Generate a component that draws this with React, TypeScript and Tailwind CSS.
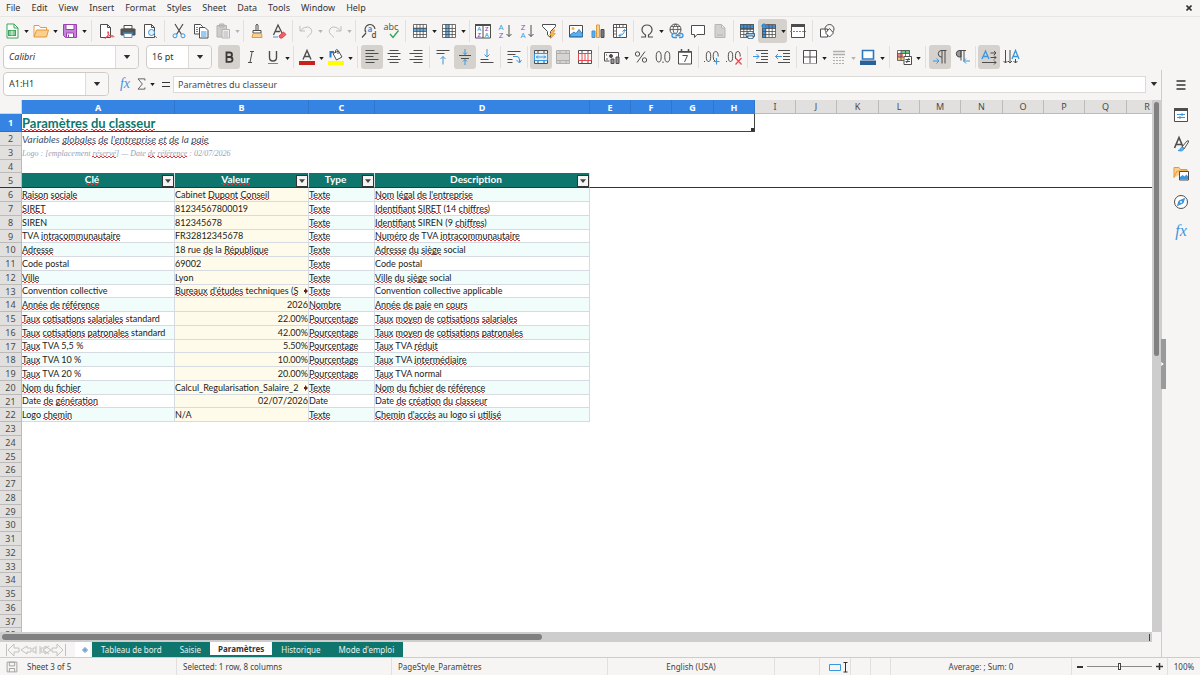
import React from "react";

const menus = ["File", "Edit", "View", "Insert", "Format", "Styles", "Sheet", "Data", "Tools", "Window", "Help"];

const columns = [
  { id: "A", width: 153 },
  { id: "B", width: 134 },
  { id: "C", width: 66 },
  { id: "D", width: 215 },
  { id: "E", width: 41 },
  { id: "F", width: 41 },
  { id: "G", width: 42 },
  { id: "H", width: 41 },
  { id: "I", width: 41 },
  { id: "J", width: 41 },
  { id: "K", width: 42 },
  { id: "L", width: 41 },
  { id: "M", width: 41 },
  { id: "N", width: 42 },
  { id: "O", width: 41 },
  { id: "P", width: 41 },
  { id: "Q", width: 42 },
  { id: "R", width: 41 },
];

const rows = [
  ["~Raison ~sociale", "Cabinet ~Dupont ~Conseil", "~Texte", "~Nom ~légal ~de ~l'entreprise"],
  ["~SIRET", "81234567800019", "~Texte", "~Identifiant ~SIRET (14 ~chiffres)"],
  ["SIREN", "812345678", "~Texte", "~Identifiant SIREN (9 ~chiffres)"],
  ["TVA ~intracommunautaire", "FR32812345678", "~Texte", "~Numéro ~de TVA ~intracommunautaire"],
  ["~Adresse", "18 rue ~de la ~République", "~Texte", "~Adresse ~du ~siège social"],
  ["Code postal", "69002", "~Texte", "Code postal"],
  ["~Ville", "Lyon", "~Texte", "~Ville ~du ~siège social"],
  ["Convention collective", "~Bureaux ~d'études techniques (~S", "~Texte", "Convention collective applicable"],
  ["~Année ~de ~référence", "2026", "~Nombre", "~Année ~de ~paie en ~cours"],
  ["~Taux ~cotisations ~salariales standard", "22.00%", "~Pourcentage", "~Taux ~moyen ~de ~cotisations ~salariales"],
  ["~Taux ~cotisations ~patronales standard", "42.00%", "~Pourcentage", "~Taux ~moyen ~de ~cotisations ~patronales"],
  ["~Taux TVA 5,5 %", "5.50%", "~Pourcentage", "~Taux TVA ~réduit"],
  ["~Taux TVA 10 %", "10.00%", "~Pourcentage", "~Taux TVA ~intermédiaire"],
  ["~Taux TVA 20 %", "20.00%", "~Pourcentage", "~Taux TVA normal"],
  ["~Nom ~du ~fichier", "Calcul_Regularisation_Salaire_2", "~Texte", "~Nom ~du ~fichier ~de ~référence"],
  ["Date ~de ~génération", "02/07/2026", "Date", "Date ~de ~création ~du ~classeur"],
  ["Logo ~chemin", "N/A", "~Texte", "~Chemin ~d'accès au logo si ~utilisé"],
];

const rightAligned = [14, 15, 16, 17, 18, 19, 21];
const truncated = [13, 20];
const emptyRows = Array.from({ length: 16 }, (_, i) => 23 + i);

const K = "#4d4d4d";
const B = "#3a96dd";

// red zigzag drawn from two crossing diagonals per tile
const squiggle =
  "bg-[image:linear-gradient(45deg,transparent_38%,#e23b3b_38%_58%,transparent_58%),linear-gradient(-45deg,transparent_38%,#e23b3b_38%_58%,transparent_58%)] bg-[length:4px_2px] bg-[position:0_100%,2px_100%] bg-repeat-x";

function Spell({ text }: { text: string }) {
  return (
    <>
      {text.split(" ").map((word, i) => {
        const [before, marked] = word.split("~");
        const tail = marked?.match(/[)\]]$/)?.[0] ?? "";
        return (
          <React.Fragment key={i}>
            {i > 0 && " "}
            {before}
            {marked && <span className={squiggle}>{tail ? marked.slice(0, -1) : marked}</span>}
            {tail}
          </React.Fragment>
        );
      })}
    </>
  );
}

function Svg({ children }: { children: React.ReactNode }) {
  return (
    <svg viewBox="0 0 16 16" className="size-4 shrink-0 overflow-visible" fill="none" stroke={K} strokeWidth="1" aria-hidden="true">
      {children}
    </svg>
  );
}

function Glyph({ children, ...rest }: React.SVGProps<SVGTextElement>) {
  return (
    <text stroke="none" fill={K} fontFamily="Open Sans, sans-serif" textAnchor="middle" {...rest}>
      {children}
    </text>
  );
}

function Caret({ muted }: { muted?: boolean }) {
  return (
    <svg viewBox="0 0 6 4" className="h-[3px] w-[5px]" fill={muted ? "#b5b3b1" : "#1d1d1d"} aria-hidden="true">
      <path d="M0 0h6L3 4z" />
    </svg>
  );
}

function Tool({ label, active, menu, muted, children }: { label: string; active?: boolean; menu?: boolean; muted?: boolean; children: React.ReactNode }) {
  return (
    <div className={`flex h-6 shrink-0 items-center rounded-[3px] ${active ? "bg-[#d5d1cd]" : ""}`}>
      <button aria-label={label} className="flex h-6 w-[22px] items-center justify-center">
        <Svg>{children}</Svg>
      </button>
      {menu && (
        <button aria-label={`${label} options`} className="flex h-6 w-[7px] items-center justify-center pt-0.5">
          <Caret muted={muted} />
        </button>
      )}
    </div>
  );
}

function Sep({ wide }: { wide?: boolean }) {
  return (
    <div className={`flex h-[22px] shrink-0 justify-center ${wide ? "w-[7px]" : "w-[5px]"}`}>
      <div className="w-px bg-[#e2e0de]" />
    </div>
  );
}

function TableGrid({ color = K }: { color?: string }) {
  return <path stroke={color} strokeWidth=".8" d="M1.5 1.5h13v13h-13zM1.5 5.5h13M1.5 8.5h13M1.5 11.5h13M4.8 1.5v13M8 1.5v13M11.2 1.5v13" />;
}

function StandardToolbar() {
  return (
    <div className="flex h-[27px] items-center overflow-hidden pl-px">
      <Tool label="New" menu>
        <path fill="#fff" stroke="#3aa757" d="M3 1h7l4 4v10H3z" />
        <path stroke="#3aa757" d="M10 1v4h4" />
        <path fill="#3aa757" stroke="none" d="M4 7h8v6H4z" />
        <path stroke="#fff" strokeWidth=".8" d="M5 9h6M5 11h6M8 7.500v5" />
      </Tool>
      <Tool label="Open" menu>
        <path fill="#fff" stroke="#e8973a" d="M1 13.500v-11h5l1.500 2h6v3" />
        <path fill="#fad08c" stroke="#e8973a" d="M1 14l2.500-7h12l-2 7z" />
      </Tool>
      <Tool label="Save" menu>
        <path fill="#c583d6" stroke="#9c3fb5" d="M1.500 1.500h13v13h-11l-2-2z" />
        <path fill="#fff" stroke="#9c3fb5" d="M4 1.500h8v5H4zM4.500 10h7v4.500h-7z" />
        <path stroke="#9c3fb5" d="M6.500 11.500v3" />
      </Tool>
      <Sep wide />
      <Tool label="Export as PDF">
        <path fill="#fff" d="M2.500 1.500h7l3 3v10h-10zM9.500 1.500v3h3" />
        <path stroke="#e5484d" d="M7 15.500c3-2 4-5 3.500-6.500-.5-1-1.500 0-.5 1.500 1 2 3 3.500 5.500 3.500 1-.5-.5-1.500-2-1.500-2.500 0-5 1-6.500 3z" />
      </Tool>
      <Tool label="Print">
        <path fill="#fff" d="M4 2.500h8V6H4z" />
        <path fill="#555" d="M1 6h14v6H1z" />
        <path stroke={B} d="M3 10h10" />
        <path fill="#fff" stroke={B} d="M4 10.500h8v4H4z" />
      </Tool>
      <Tool label="Print preview">
        <path fill="#fff" d="M2.500 1.500h7l3 3v10h-10zM9.500 1.500v3h3" />
        <circle cx="9.500" cy="9.500" r="3" fill="#e3f1fb" stroke={B} />
        <path stroke={B} d="M11.500 11.500l3.500 3.500" />
      </Tool>
      <Sep wide />
      <Tool label="Cut">
        <path strokeWidth="1.200" d="M4 1l6.500 10.500M12 1L5.500 11.500" />
        <circle cx="4" cy="12.800" r="2" stroke={B} />
        <circle cx="12" cy="12.800" r="2" stroke={B} />
      </Tool>
      <Tool label="Copy">
        <path fill="#fff" d="M1.500 1.500h6l2 2v7.500h-8z" />
        <path fill="#fff" d="M6.500 4.500h5.500l3 3v7.500H6.500z" />
        <path stroke={B} d="M3 4.500h2M3 6.500h2M3 8.500h2M8 9h5.500M8 11h5.500M8 13h5.500" />
      </Tool>
      <Tool label="Paste" menu muted>
        <path fill="#cfcdcb" stroke="#b5b3b1" d="M2 2.500h9.500v11.500H2zM4.500 1h4.500v3H4.500z" />
        <path fill="#eee" stroke="#b5b3b1" d="M7 6.500h7.500v8.500H7zM8.500 9h4.500M8.500 11h4.500M8.500 13h4.500" />
      </Tool>
      <Sep />
      <Tool label="Clone formatting">
        <path d="M7 7.500V2q1-1.500 2 0v5.500M4 7.500h8v2.500H4z" fill="#fff" />
        <path fill="#fad08c" stroke="#e8973a" d="M4 10.500h8.500l.5 4H3z" />
      </Tool>
      <Tool label="Clear formatting">
        <path strokeWidth="1.300" d="M2.500 12L7 2l4.500 9M4 8.500h5" />
        <path stroke={B} d="M2 14h5" />
        <path fill="#f06268" stroke="#d8434a" d="M8 13l4.500-4 2.500 2.500-4 3.500H9z" />
      </Tool>
      <Sep />
      <Tool label="Undo" menu muted>
        <path stroke="#bfbdbb" d="M2 3v5h5M2.500 8C5 4 11 2.500 13 6s-.5 5-4 8.500" />
      </Tool>
      <Tool label="Redo" menu muted>
        <path stroke="#bfbdbb" d="M14 3v5H9M13.500 8C11 4 5 2.500 3 6s.5 5 4 8.500" />
      </Tool>
      <Sep />
      <Tool label="Find and replace">
        <path d="M5 9.500A5 5 0 1 1 14 6M5 10l-4 4.500" strokeWidth="1.200" />
        <Glyph x="9" y="8.500" fontSize="8" fill={B} fontWeight="700">a</Glyph>
        <Glyph x="13" y="15" fontSize="8" fontWeight="600">d</Glyph>
      </Tool>
      <Tool label="Spelling">
        <Glyph x="8" y="7" fontSize="9">abc</Glyph>
        <path stroke="#33a65c" strokeWidth="1.400" d="M7 11l3 3.500 5.500-7" />
      </Tool>
      <Sep wide />
      <Tool label="Row" menu>
        <path fill="#fff" stroke="none" d="M1.500 1.500h13v13h-13z" />
        <path fill="#5cb0ee" stroke="none" d="M1 4.500h14v4H1z" />
        <TableGrid />
      </Tool>
      <Tool label="Column" menu>
        <path fill="#fff" stroke="none" d="M1.500 1.500h13v13h-13z" />
        <path fill="#5cb0ee" stroke="none" d="M4.500 1h4v14h-4z" />
        <TableGrid />
      </Tool>
      <Sep />
      <Tool label="Sort">
        <path fill="#fff" d="M.5 1.500h15v13.500H.5zM8 3v12" />
        <path fill={K} d="M.5 1.500h15v1H.5z" />
        <Glyph x="4.300" y="8" fontSize="6" fill={B} fontWeight="600">A</Glyph>
        <Glyph x="4.300" y="14.300" fontSize="6" fill="#a33cc2" fontWeight="600">Z</Glyph>
        <Glyph x="11.800" y="8" fontSize="6" fill="#a33cc2" fontWeight="600">Z</Glyph>
        <Glyph x="11.800" y="14.300" fontSize="6" fill={B} fontWeight="600">A</Glyph>
      </Tool>
      <Tool label="Sort ascending">
        <Glyph x="4" y="7" fontSize="8" fill={B}>A</Glyph>
        <Glyph x="4" y="15" fontSize="8" fill="#a33cc2">Z</Glyph>
        <path d="M12 2v11.500M9.500 11l2.500 2.500 2.500-2.500" />
      </Tool>
      <Tool label="Sort descending">
        <Glyph x="4" y="7" fontSize="8" fill="#a33cc2">Z</Glyph>
        <Glyph x="4" y="15" fontSize="8" fill={B}>A</Glyph>
        <path d="M12 2v11.500M9.500 11l2.500 2.500 2.500-2.500" />
      </Tool>
      <Tool label="AutoFilter">
        <path fill="#fff" d="M1.500 1.500h13v2L9.500 8.500v6L6.500 12V8.500l-5-5z" />
        <path fill="#fbb44e" stroke="#e8973a" strokeWidth=".7" d="M12 7l-3.500 5h2.500l-1.500 3.500 5-5h-2.500l2-3.500z" />
      </Tool>
      <Sep />
      <Tool label="Image">
        <path fill="#fff" d="M1.500 2.500h13v11.500h-13z" />
        <circle cx="5" cy="5.500" r="1.500" fill="#fbb44e" stroke="none" />
        <path fill="#5cb0ee" stroke="#1e72b8" strokeWidth=".8" d="M2 13.500V12l4-3 2 1.500 3-4 3.500 4.500v2.500z" />
      </Tool>
      <Tool label="Chart">
        <path fill="#5cb0ee" stroke={B} d="M2 8h3v6.500H2z" />
        <path fill="#fad08c" stroke="#e8973a" d="M6.500 2h3v12.500h-3z" />
        <path fill="#777" d="M11 6.500h3v8h-3z" />
      </Tool>
      <Tool label="Pivot table">
        <path fill="#fff" d="M1.500 1.500h13v13h-13z" />
        <path strokeWidth=".8" d="M1.500 4.500h13M4.500 1.500v13M7.500 1.500v3M11 1.500v3M1.500 8h3M1.500 11h3" />
        <path stroke={B} d="M7 12.500q5 0 5.500-5.500M9 10.500l-2 2 2 2M10.500 8.500l2-2 2 2" />
      </Tool>
      <Sep />
      <Tool label="Special character" menu>
        <path strokeWidth="1.200" d="M2 14h4.500v-2C.500 8 3 2 8 2s7.500 6 1.500 10v2H14" />
      </Tool>
      <Tool label="Hyperlink">
        <circle cx="7.500" cy="6.500" r="5.500" />
        <path strokeWidth=".8" d="M2 6.500h11M7.500 1q-5 5 0 11M7.500 1q5 5 0 11M3 3.500h9" />
        <path fill="#f6f5f4" stroke={B} strokeWidth="1.300" d="M9 10.500H6a2 2 0 0 0 0 4h3M11 10.500h2a2 2 0 0 1 0 4h-2M7.500 12.500h5" />
      </Tool>
      <Tool label="Comment">
        <path fill="#fff" d="M1.500 2.500h13v9H7L4.500 14.500v-3h-3z" />
      </Tool>
      <Tool label="Headers and footers">
        <path fill="#d3d1cf" stroke="#b9b7b5" d="M3 1.500h6.500l3.500 3.500v9.500H3zM9.500 1.500V5H13M5 12h6" />
      </Tool>
      <Sep />
      <Tool label="Define print area">
        <path fill="#fff" stroke="none" d="M1 1h14v13H1z" />
        <path fill="#3a8fd8" stroke="none" d="M1 1h14v6H1z" />
        <TableGrid />
        <path fill="#8cc4f0" stroke="#3f5f7c" d="M7 10.500h8.500v3H7z" />
        <path fill="#fff" stroke="#3f5f7c" strokeWidth=".8" d="M9 8.500h5v2H9zM9 13h5v2.500H9z" />
      </Tool>
      <Tool label="Freeze rows and columns" active menu>
        <path fill="#fff" stroke="none" d="M2 2h13v13H2z" />
        <path fill="#3a8fd8" stroke="none" d="M1 2h14v3.500H1zM1 2h4v13H1z" />
        <TableGrid />
        <path stroke={B} d="M0 3h6M3 0v6M1 1l4 4M5 1L1 5" />
      </Tool>
      <Tool label="Split window">
        <path fill="#fff" d="M1.500 1.500h13v13h-13z" />
        <path fill={K} d="M1.500 1.500h13v2h-13z" />
        <path stroke={B} strokeDasharray="2 1" d="M0 8.500h16" />
      </Tool>
      <Sep wide />
      <Tool label="Show draw functions">
        <path fill="#fff" d="M1.500 6h7v8h-7z" />
        <circle cx="10.500" cy="6" r="4.500" />
        <path fill="#fff" d="M10.500 5.500l4 4.500-4 4-4-4z" />
      </Tool>
    </div>
  );
}

function FormattingToolbar() {
  const combo = "flex h-6 shrink-0 rounded-[4px] border border-[#cfccc8] bg-white";
  const drop = "flex w-[23px] items-center justify-center rounded-r-[4px] border-l border-[#dedbd8] bg-[#f8f7f6]";
  return (
    <div className="flex h-[26px] items-center overflow-hidden pl-[3px]">
      <div className={`${combo} mr-[7px] w-[136px]`}>
        <input aria-label="Font name" defaultValue="Calibri" className="min-w-0 flex-1 bg-transparent pl-[5px] text-[9px] italic outline-none" />
        <button aria-label="Font list" className={drop}>
          <BigCaret />
        </button>
      </div>
      <div className={`${combo} mr-[6px] w-[66px]`}>
        <input aria-label="Font size" defaultValue="16 pt" className="min-w-0 flex-1 bg-transparent pl-[5px] text-[9px] outline-none" />
        <button aria-label="Font size list" className={drop}>
          <BigCaret />
        </button>
      </div>
      <Tool label="Bold" active>
        <path strokeWidth="1.800" stroke="#3a3a3a" d="M5.500 3.500h3q2.500 0 2.500 2.200T8.500 8h-3zM5.500 8h3.200q2.800 0 2.800 2.400t-2.800 2.400H5.500zM5.500 2.600v11" />
      </Tool>
      <Tool label="Italic">
        <path d="M7 2.500h4M5 13.500h4M9.200 2.500L7 13.500" />
      </Tool>
      <Tool label="Underline" menu>
        <path strokeWidth="1.400" d="M4.500 2v6.500q0 3.500 3.500 3.500t3.500-3.500V2" />
        <path stroke={B} d="M3 14.500h10" />
      </Tool>
      <Sep />
      <Tool label="Font color" menu>
        <path strokeWidth="1.400" d="M4 10.500L8 1.500l4 9M5.500 7.500h5" />
        <path fill="#c9211e" stroke="none" d="M0 12h16v4H0z" />
      </Tool>
      <Tool label="Background color" menu>
        <path fill="#fff" d="M5 4.500l5.500-2.500 3.500 6-5.500 3zM7.500 4V1.500q1.500-2 2.500 0V5" />
        <path stroke="#2a78c0" strokeWidth="2" d="M6 3H2.500v5.500" />
        <path fill="#ff0" stroke="none" d="M0 12h16v4H0z" />
      </Tool>
      <Sep wide />
      <Tool label="Align left" active>
        <path d="M1.500 1.500h9M1.500 4.500h13M1.500 7.500h8M1.500 10.500h13M1.500 13.500h9" />
      </Tool>
      <Tool label="Center horizontally">
        <path d="M3.500 1.500h9M1.500 4.500h13M4 7.500h8M1.500 10.500h13M3.500 13.500h9" />
      </Tool>
      <Tool label="Align right">
        <path d="M5.500 1.500h9M1.500 4.500h13M6.500 7.500h8M1.500 10.500h13M5.500 13.500h9" />
      </Tool>
      <Sep />
      <Tool label="Align top">
        <path d="M1.500 1.500h13M1.500 4.500h8" />
        <path stroke={B} d="M8 15.500V7.500M5.500 10L8 7.500 10.500 10" />
      </Tool>
      <Tool label="Center vertically" active>
        <path d="M2 6.500h12M4 9.500h8" />
        <path stroke={B} d="M8 0v5.500M6 3.500l2 2 2-2M8 16v-5.500M6 12.500l2-2 2 2" />
      </Tool>
      <Tool label="Align bottom">
        <path d="M1.500 10.500h8M1.500 13.500h13" />
        <path stroke={B} d="M8 0v8M5.500 5.500L8 8l2.500-2.500" />
      </Tool>
      <Sep />
      <Tool label="Wrap text">
        <path d="M1.500 2.500h13M1.500 5.500h8M1.500 10.500h5M1.500 13.500h5" />
        <path stroke={B} d="M7 7.500h4q2.500 0 2.500 3.500v2M10.500 11l3 3 2-3" />
      </Tool>
      <Sep />
      <Tool label="Merge and center cells" active>
        <path fill="#fff" stroke="none" d="M1.500 1.500h13v13h-13z" />
        <path fill="#e3f1fb" d="M1.500 1.500h13v13h-13zM1.500 4.500h13M1.500 11.500h13M5 1.500v3M11 1.500v3M5 11.500v3M11 11.500v3" />
        <path stroke={B} d="M1.500 4.500h13v7h-13zM3 8h10M5 6.500L3.500 8 5 9.500M11 6.500L12.500 8 11 9.500" />
      </Tool>
      <Tool label="Merge cells">
        <path fill="#d6d4d2" stroke="#b0aeac" d="M1.500 1.500h13v13h-13zM1.500 4.500h13M1.500 11.500h13M5 1.500v3M11 1.500v3M5 11.500v3M11 11.500v3" />
      </Tool>
      <Tool label="Unmerge cells">
        <path fill="#fff" d="M1.500 1.500h13v13h-13zM5 1.500v3M11 1.500v3M5 11.500v3M11 11.500v3" />
        <path stroke="#e5484d" d="M1.500 4.500h13v7h-13zM5 4.500v7M8 4.500v7M11 4.500v7" />
      </Tool>
      <Sep />
      <Tool label="Format as currency" menu>
        <path fill="#fff" d="M.5 3.500h14v6M.5 3.500V12h5" />
        <circle cx="7" cy="7" r="1.500" fill={K} />
        <path fill="#999" d="M7 10h3v4.500H7zM12 8h3v6.500h-3zM2 10h2M2 6h1" />
      </Tool>
      <Tool label="Format as percent">
        <circle cx="4.500" cy="5" r="2.200" />
        <circle cx="11.500" cy="11" r="2.200" />
        <path d="M12 2.500L4 13.500" />
      </Tool>
      <Tool label="Format as number">
        <path d="M8 12.500v1.500M3.700 2.500q2.500 0 2.500 5.300t-2.500 5.200q-2.500 0-2.500-5.200t2.500-5.300zM12.300 2.500q2.500 0 2.500 5.300t-2.500 5.200q-2.500 0-2.500-5.200t2.500-5.300z" />
      </Tool>
      <Tool label="Format as date">
        <path fill="#fff" d="M1.500 2.500h13v12.500h-13z" />
        <path strokeWidth="1.500" d="M1.500 3h13M4.500 0v3M11.500 0v3" />
        <path d="M5.500 6.500h5l-3 6.500" />
      </Tool>
      <Sep />
      <Tool label="Add decimal place">
        <path d="M0 12.500h1M4.500 2.500q2.200 0 2.200 5t-2.200 5q-2.200 0-2.200-5t2.200-5zM11 12q-1.800-.5-1.800-4.500 0-5 2.500-5t2.500 5" />
        <path stroke={B} strokeWidth="1.200" d="M12.500 9v6.500M9.500 12.500h6" />
      </Tool>
      <Tool label="Delete decimal place">
        <path d="M0 12.500h1M4.500 2.500q2.200 0 2.200 5t-2.200 5q-2.200 0-2.200-5t2.200-5zM9.500 10q-.5-7.500 2.200-7.500t2.500 5" />
        <path stroke="#e5484d" strokeWidth="1.200" d="M9.500 9l6 6.500M15.500 9l-6 6.500" />
      </Tool>
      <Sep />
      <Tool label="Increase indent">
        <path d="M3 1.500h12M8 4.500h7M8 7.500h7M8 10.500h7M3 13.500h12" />
        <path stroke={B} d="M0 7.500h6M3.500 5L6 7.500 3.500 10" />
      </Tool>
      <Tool label="Decrease indent">
        <path d="M3 1.500h12M8 4.500h7M8 7.500h7M8 10.500h7M3 13.500h12" />
        <path stroke={B} d="M.5 7.500H7M3 5L.5 7.500 3 10" />
      </Tool>
      <Sep />
      <Tool label="Borders" menu>
        <path fill="#fff" d="M1.500 1.500h13v13h-13z" />
        <path d="M8 1.500v13M1.500 8h13" />
        <path stroke="#e8973a" d="M1.500 14.500h13" />
      </Tool>
      <Tool label="Border style" menu muted>
        <path stroke="#b0aeac" strokeWidth="1.500" d="M2 2.500h12M2 5.500h12" />
        <path stroke="#b0aeac" strokeDasharray="2 1" d="M2 8.500h12M2 11.500h12M2 14.500h12" />
      </Tool>
      <Tool label="Border color" menu>
        <path fill="#fff" stroke="#2a78c0" strokeWidth="1.600" d="M2.500 1.500h11v8.500h-11z" />
        <path fill="#2a6099" stroke="none" d="M0 11.500h16V16H0z" />
      </Tool>
      <Sep wide />
      <Tool label="Conditional" menu>
        <path fill="#fff" stroke="none" d="M1 1h13v11H1z" />
        <path fill="#6cc487" stroke="none" d="M5 1h9v3.500H5z" />
        <path fill="#f08084" stroke="none" d="M1 4.500h6V8H1z" />
        <path fill="#fbc26e" stroke="none" d="M1 8h6v3.500H1z" />
        <path strokeWidth=".8" d="M1.500 1.500h12v10h-12zM1.500 4.500h12M1.500 8h12M5 1.500v10M9.500 1.500v10" />
        <path fill="#fff" d="M8 7.500h7.500v8H8zM9.500 10.500h4.500M9.500 12.500h4.500M13 9l-2.500 5" />
      </Tool>
      <Sep wide />
      <Tool label="Left-to-right" active>
        <path d="M14.500 1.500H9a3.300 3.300 0 0 0 0 6.500h1M10 1.500v13M13 1.500v13" />
        <path stroke={B} d="M1 12h6M4.500 9.500L7 12l-2.500 2.500" />
      </Tool>
      <Tool label="Right-to-left">
        <path fill="#999" d="M7 1.500H5a3.300 3.300 0 0 0 0 6.500h2z" />
        <path d="M12 1.500H5M7 1.500v10M10 1.500v10" />
        <path stroke={B} d="M9.500 12H16M12 9.500L9.500 12l2.500 2.500" />
      </Tool>
      <Sep />
      <Tool label="Text direction from left to right" active>
        <path stroke={B} strokeWidth="1.300" d="M1 10L4.500 2 8 10M2 7.500h5" />
        <path d="M9.500 4H15M13 2l2 2-2 2M9.500 8.500H15M13 6.500l2 2-2 2M1 13.500h14M13 11.500l2 2-2 2" />
      </Tool>
      <Tool label="Text direction from top to bottom">
        <path stroke={B} strokeWidth="1.300" d="M9 10l3.500-8.500L16 10M10 7.500h5" />
        <path d="M2.500 1v13M.5 12l2 2 2-2M7 1v13M5 12l2 2 2-2M12.500 10v4M10.500 12l2 2 2-2" />
      </Tool>
    </div>
  );
}

function BigCaret() {
  return (
    <svg viewBox="0 0 8 5" className="h-[4px] w-[8px]" fill="#2e2e2e" aria-hidden="true">
      <path d="M0 0h8L4 5z" />
    </svg>
  );
}

function FormulaBar() {
  return (
    <div className="flex h-[30px] shrink-0 items-center pb-0.5 pl-[3px]">
      <div className="flex h-6 w-[106px] shrink-0 rounded-[4px] border border-[#cfccc8] bg-white">
        <input aria-label="Name box" defaultValue="A1:H1" className="min-w-0 flex-1 bg-transparent pl-[5px] text-[9px] outline-none" />
        <button aria-label="Named ranges" className="flex w-[23px] items-center justify-center rounded-r-[4px] border-l border-[#dedbd8] bg-[#f8f7f6]">
          <BigCaret />
        </button>
      </div>
      <button aria-label="Function wizard" className="ml-2 w-4 text-center font-['Liberation_Serif',serif] text-[14px] leading-none text-[#3a96dd] italic">
        fx
      </button>
      <button aria-label="Select function" className="flex w-[26px] items-center justify-center gap-1">
        <svg viewBox="0 0 10 14" className="h-3 w-[9px]" fill="none" stroke={K} aria-hidden="true">
          <path d="M9 3V1H1l5 6-5 6h8v-2" />
        </svg>
        <Caret />
      </button>
      <button aria-label="Formula" className="flex h-4 w-[14px] flex-col items-center justify-center gap-[3px]">
        <span className="h-px w-2 bg-[#333]" />
        <span className="h-px w-2 bg-[#333]" />
      </button>
      <input
        aria-label="Formula input"
        defaultValue="Paramètres du classeur"
        className="h-[17px] min-w-0 flex-1 border border-[#dcdad7] bg-white pl-1 text-[9px] text-[#4a4a4a] outline-none"
      />
      <button aria-label="Expand formula bar" className="flex w-[15px] justify-center">
        <BigCaret />
      </button>
    </div>
  );
}

function RowHead({ n, active, className = "border-b-[#bdbbb9]" }: { n: number; active?: boolean; className?: string }) {
  return (
    <th
      scope="row"
      className={`border-r border-b p-0 text-center text-[9px] leading-none ${
        active ? "border-[#2a6fc4] bg-[#3584e4] font-bold text-white" : `border-r-[#bdbbb9] bg-[#e1e0df] font-normal text-[#4a4a4a] ${className}`
      }`}
    >
      {n}
    </th>
  );
}

function HeaderCell({ text }: { text: string }) {
  return (
    <th scope="col" className="border-r border-b border-r-[#cfe3e0] border-b-[#333] bg-[#0f766e] p-0 font-bold text-white">
      <div className="flex h-[14px] items-end">
        <span className="flex-1 self-start font-[Lato,sans-serif] text-[10px] leading-3">
          <Spell text={text} />
        </span>
        <button aria-label="Filter" className="flex h-3 w-3 shrink-0 items-center justify-center border border-[#333] bg-[#f4f4f4]">
          <svg viewBox="0 0 8 5" className="h-1 w-[6px]" fill="#444" aria-hidden="true">
            <path d="M0 0h8L4 5z" />
          </svg>
        </button>
      </div>
    </th>
  );
}

function Sheet() {
  return (
    <div className="min-w-0 flex-1 overflow-hidden bg-white">
      <table className="w-[1166px] table-fixed border-separate border-spacing-0 font-[Lato,sans-serif] text-[9px] leading-3 text-[#222] [&_td]:overflow-hidden [&_td]:whitespace-nowrap [&_th]:font-['Noto_Sans',sans-serif]">
        <colgroup>
          <col className="w-[22px]" />
          {columns.map((c) => (
            <col key={c.id} style={{ width: c.width }} />
          ))}
        </colgroup>
        <thead>
          <tr className="h-[14px]">
            <td className="border-r border-b border-[#d6d4d2] bg-[#f6f5f4] p-0" />
            {columns.map((c, i) => (
              <th
                key={c.id}
                scope="col"
                className={`border-r p-0 text-[9px] leading-none ${
                  i < 8 ? "border-[#2f76cc] bg-[#3584e4] font-bold text-white" : "border-b border-[#bdbbb9] bg-[#e1e0df] font-normal text-[#4a4a4a]"
                }`}
              >
                {c.id}
              </th>
            ))}
          </tr>
        </thead>
        <tbody>
          <tr className="h-[18px]">
            <RowHead n={1} active />
            <td colSpan={8} className="relative border-r border-b border-[#444] p-0 text-[13px] leading-4 font-bold text-[#0f766e]">
              <Spell text="~Paramètres ~du ~classeur" />
              <span className="absolute right-0 bottom-0 size-[3px] bg-[#333]" />
            </td>
          </tr>
          <tr className="h-[14px]">
            <RowHead n={2} />
            <td colSpan={4} className="p-0 text-[10px] text-[#475569] italic">
              <Spell text="Variables ~globales ~de ~l'entreprise ~et ~de la ~paie" />
            </td>
          </tr>
          <tr className="h-[14px]">
            <RowHead n={3} />
            <td colSpan={4} className="p-0 pt-0.5 font-['Liberation_Serif',serif] text-[8px] text-[#94a3b8] italic">
              <Spell text="Logo : [emplacement ~réservé] — Date ~de ~référence : 02/07/2026" />
            </td>
          </tr>
          <tr className="h-[13px]">
            <RowHead n={4} />
          </tr>
          <tr className="h-[15px]">
            <RowHead n={5} className="border-b-[#333]" />
            <HeaderCell text="~Clé" />
            <HeaderCell text="~Valeur" />
            <HeaderCell text="Type" />
            <HeaderCell text="Description" />
            <td colSpan={14} className="border-b border-[#333] p-0" />
          </tr>
          {rows.map((row, i) => {
            const n = i + 6;
            const tint = i % 2 === 0 ? "bg-[#f0fdfa]" : "bg-white";
            return (
              <tr key={n} className={i % 4 === 3 ? "h-[13px]" : "h-[14px]"}>
                <RowHead n={n} />
                {row.map((text, c) => (
                  <td
                    key={c}
                    className={`relative border-r border-b border-[#d5dbe0] p-0 ${c === 1 ? "bg-[#fffbeb]" : tint} ${
                      c === 1 && rightAligned.includes(n) ? "text-right" : ""
                    }`}
                  >
                    <Spell text={text} />
                    {c === 1 && truncated.includes(n) && (
                      <span className="absolute inset-y-0 right-0 flex items-center">
                        <svg viewBox="0 0 4 6" className="h-[6px] w-1" fill="#6b2020" aria-hidden="true">
                          <path d="M0 2h1V0l3 3-3 3V4H0z" />
                        </svg>
                      </span>
                    )}
                  </td>
                ))}
              </tr>
            );
          })}
          {emptyRows.map((n) => (
            <tr key={n} className={(n - 6) % 4 === 3 ? "h-[13px]" : "h-[14px]"}>
              <RowHead n={n} />
            </tr>
          ))}
        </tbody>
      </table>
    </div>
  );
}

function SheetTabs() {
  const tabs = ["Tableau de bord", "Saisie", "Paramètres", "Historique", "Mode d'emploi"];
  return (
    <div className="flex h-[15px] shrink-0 items-stretch">
      <div className="flex w-[75px] items-center pl-[5px]">
        <svg viewBox="0 0 62 12" className="h-3 w-[62px]" fill="none" stroke="#c4c2c0" aria-hidden="true">
          <path d="M1.500 0v12M9 0L3 6l6 6V8h5V4H9zM22 2l-6 4 6 4V8h4V4h-4zM31 2v8M35 2v8M31 4h-3v4h3M44 2l-6 4 6 4M40 2l6 4-6 4V8h-4V4h4zM52 0l6 6-6 6V8h-5V4h5zM60.500 0v12" />
        </svg>
      </div>
      <button aria-label="Add sheet" className="mr-0.5 flex w-[15px] items-center justify-end bg-white pr-0.5">
        <svg viewBox="0 0 6 6" className="size-[6px]" fill="none" stroke="#2a6fb8" strokeWidth=".8" aria-hidden="true">
          <path fill="#fff" d="M3 .5L5.500 3 3 5.500.5 3z" />
          <path d="M3 1.500v3M1.500 3h3" />
        </svg>
      </button>
      {tabs.map((t) => (
        <button
          key={t}
          className={`text-[8px] leading-none ${
            t === "Paramètres" ? "border-b-2 border-[#0f766e] bg-white px-2 font-bold text-[#333]" : "bg-[#0f766e] px-[9px] text-[#e6f2f0]"
          }`}
        >
          {t}
        </button>
      ))}
    </div>
  );
}

function Sidebar() {
  return (
    <aside className="relative flex w-[39px] shrink-0 flex-col items-center gap-[13px] border-l border-[#cfccc8] pt-[7px]">
      <button aria-label="Sidebar settings">
        <Svg>
          <path strokeWidth="1.400" stroke="#333" d="M3.500 4h9M3.500 8h9M3.500 12h9" />
        </Svg>
      </button>
      <button aria-label="Properties" className="mt-px">
        <Svg>
          <path fill="#fff" d="M1.500 1.500h13v13h-13z" />
          <path fill={K} d="M1.500 1.500h13v2h-13z" />
          <path stroke={B} d="M4 7.500h8M4 10.500h8M9 6v3M7 9v3" />
        </Svg>
      </button>
      <button aria-label="Styles">
        <Svg>
          <path strokeWidth="1.600" d="M1.500 12L6 1.500 10 11M3 8.500h6" />
          <path fill="#fff" d="M9 11l5-6q2-1 1.500 1L11 13z" />
          <path fill="#5cb0ee" stroke={B} d="M5 14.500q2 0 2.500-2t3-1q1 3-2.500 3.500z" />
        </Svg>
      </button>
      <button aria-label="Gallery">
        <Svg>
          <path fill="#fad08c" stroke="#e8973a" d="M1 12.500V2.500h5l1.500 2H14v1M1 12.500L4 6h11" />
          <path fill="#fff" d="M6.500 6.500h9v8.500h-9z" />
          <path fill={B} stroke="none" d="M7 14.500V12l2.500-2 2 1.500 2-2 1.500 2v3z" />
        </Svg>
      </button>
      <button aria-label="Navigator">
        <Svg>
          <circle cx="8" cy="8" r="6.500" fill="#fff" />
          <path fill={B} stroke={B} d="M11.500 4.500L10 9l-5.500 2.500L6 7z" />
          <circle cx="8" cy="8" r="1" fill="#fff" stroke="none" />
        </Svg>
      </button>
      <button aria-label="Functions" className="h-4 font-['Liberation_Serif',serif] text-[16px] leading-4 text-[#3a96dd] italic">
        fx
      </button>
      <button aria-label="Hide sidebar" className="absolute top-[269px] -left-px flex h-[50px] w-[5px] items-center bg-[#9a9a9a]">
        <svg viewBox="0 0 4 6" className="h-1 w-[3px]" fill="#fff" aria-hidden="true">
          <path d="M0 0l4 3-4 3z" />
        </svg>
      </button>
    </aside>
  );
}

function StatusBar() {
  const cell = "flex items-center border-r border-[#e2e0de]";
  return (
    <footer className="flex h-[18px] shrink-0 items-stretch border-t border-[#cfccc8] text-[8px] text-[#3f3f3f]">
      <div className={`${cell} w-[23px] justify-center border-r-0`}>
        <svg viewBox="0 0 16 16" className="size-3" fill="none" stroke="#a3a1a0" strokeWidth="1.300" aria-hidden="true">
          <path d="M1.500 1.500h13v13h-13zM4.500 1.500h7v5h-7zM4.500 14.500V10h7v4.500" />
        </svg>
      </div>
      <div className={`${cell} w-[154px] pl-1`}>Sheet 3 of 5</div>
      <div className={`${cell} w-[215px] pl-[6px]`}>Selected: 1 row, 8 columns</div>
      <div className={`${cell} w-[216px] pl-[6px]`}>PageStyle_Paramètres</div>
      <div className={`${cell} min-w-0 flex-1 justify-center`}>English (USA)</div>
      <div className={`${cell} w-[45px]`} />
      <div className={`${cell} w-[31px] justify-end pr-px`}>
        <svg viewBox="0 0 20 12" className="h-3 w-5" fill="none" aria-hidden="true">
          <path stroke={B} d="M.5 3.500h11v6H.5z" />
          <path stroke="#333" d="M14.500 1.500h4M14.500 11h4M16.500 1.500V11" />
        </svg>
      </div>
      <div className={`${cell} w-5`} />
      <div className={`${cell} w-5`} />
      <div className={`${cell} w-[181px] justify-center`}>Average: ; Sum: 0</div>
      <div className={`${cell} w-[96px] justify-center gap-1`}>
        <button aria-label="Zoom out" className="h-[2px] w-[6px] bg-[#333]" />
        <div className="relative flex h-3 w-[65px] items-center">
          <input aria-label="Zoom" type="range" className="absolute inset-0 w-full opacity-0" />
          <span className="h-px w-full bg-[#8a8a8a]" />
          <span className="absolute left-[31px] h-[7px] w-[3px] border border-[#444] bg-white" />
        </div>
        <button aria-label="Zoom in">
          <svg viewBox="0 0 7 7" className="size-[7px]" stroke="#333" strokeWidth="1.500" aria-hidden="true">
            <path d="M3.500 0v7M0 3.500h7" />
          </svg>
        </button>
      </div>
      <div className="flex w-8 items-center justify-center">100%</div>
    </footer>
  );
}

export default function App() {
  return (
    <div className="flex h-screen flex-col overflow-hidden bg-[#f6f5f4] font-['Noto_Sans',sans-serif] text-[#333]">
      <nav className="flex h-[17px] shrink-0 items-center border-b border-[#e8e6e4] pl-[6px] text-[9px]">
        {menus.map((m) => (
          <button key={m} className="mr-[11px]">
            {m}
          </button>
        ))}
        <button aria-label="Close document" className="mr-2 ml-auto">
          <svg viewBox="0 0 6 6" className="size-[6px]" stroke="#333" strokeWidth="1.600" aria-hidden="true">
            <path d="M.5.5l5 5M5.500.5l-5 5" />
          </svg>
        </button>
      </nav>
      <StandardToolbar />
      <FormattingToolbar />
      <div className="flex min-h-0 flex-1">
        <div className="flex min-w-0 flex-1 flex-col">
          <FormulaBar />
          <div className="flex min-h-0 flex-1">
            <Sheet />
            <div className="flex w-[9px] shrink-0 justify-center bg-[#cdcdcd] pt-0.5">
              <div className="h-[48%] w-[5px] rounded-full bg-[#808080]" />
            </div>
          </div>
          <div className="mr-[9px] flex h-[10px] shrink-0 items-center bg-[#cdcdcd] pr-[2px] pl-[2px]">
            <div className="h-[6px] w-[47%] rounded-full bg-[#808080]" />
            <div className="ml-auto h-[7px] w-px bg-[#444]" />
          </div>
          <SheetTabs />
        </div>
        <Sidebar />
      </div>
      <StatusBar />
    </div>
  );
}
